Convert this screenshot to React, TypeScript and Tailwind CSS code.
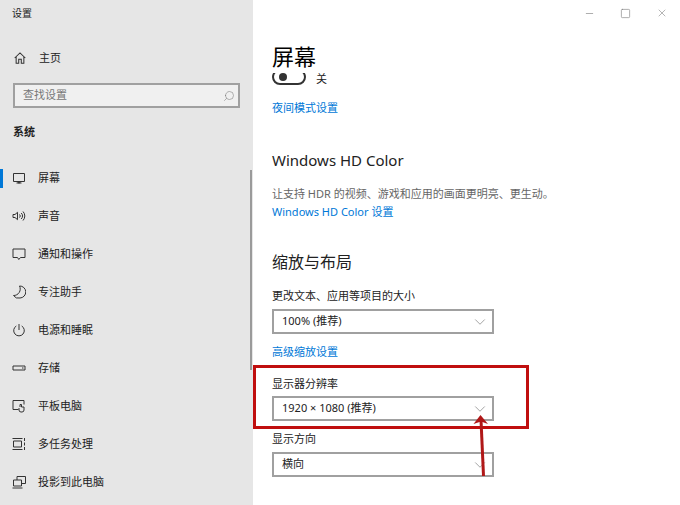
import { ChevronDown, Search, Minus, Square, X } from "lucide-react";
import type { ReactNode } from "react";

const cjk = "font-['Noto_Sans','Noto_Sans_CJK_SC',sans-serif]";

const ic = {
  fill: "none",
  stroke: "#333",
  strokeWidth: 1,
};

function Icon({ children }: { children: ReactNode }) {
  return (
    <svg viewBox="0 0 14 14" className="w-[14px] h-[14px] shrink-0" {...ic}>
      {children}
    </svg>
  );
}

const navItems: { label: string; active?: boolean; icon: ReactNode }[] = [
  {
    label: "屏幕",
    active: true,
    icon: (
      <Icon>
        <path d="M1.500 2.500h11v8h-11z" />
        <path d="M4.500 12h5M6 10.800h2v1H6z" />
      </Icon>
    ),
  },
  {
    label: "声音",
    icon: (
      <Icon>
        <path d="M1 5.500v3h2l2.500 2.200V3.300L3 5.500z" />
        <path d="M7.500 5.500a2 2 0 0 1 0 3M9.200 4a4 4 0 0 1 0 6M11 2.500a6.500 6.500 0 0 1 0 9" />
      </Icon>
    ),
  },
  {
    label: "通知和操作",
    icon: (
      <Icon>
        <path d="M1 2h12v8.500H8.500L6.800 12.500 5.500 10.500H1z" />
      </Icon>
    ),
  },
  {
    label: "专注助手",
    icon: (
      <Icon>
        <path d="M7.500 1a6 6 0 0 1 .5 12 6 6 0 0 1-6.500-2.500 6.500 6.500 0 0 0 6-9.500z" />
      </Icon>
    ),
  },
  {
    label: "电源和睡眠",
    icon: (
      <Icon>
        <path d="M7 1v6" />
        <path d="M4.300 3a5.300 5.300 0 1 0 5.400 0" />
      </Icon>
    ),
  },
  {
    label: "存储",
    icon: (
      <Icon>
        <path d="M1 5h12v4H1z" />
        <path d="M10 7h1.500" />
      </Icon>
    ),
  },
  {
    label: "平板电脑",
    icon: (
      <Icon>
        <path d="M6.500 10.500H1V1.500h11v4" />
        <path d="M8 8V5.500h1.500V8H12v3a2 2 0 0 1-2 2H9a2 2 0 0 1-2-2V9" />
      </Icon>
    ),
  },
  {
    label: "多任务处理",
    icon: (
      <Icon>
        <path d="M0.500 1.500h10M0.500 12.500h10M1.500 4h8v6h-8z" />
        <path d="M12.500 1v3M12.500 5.500v3M12.500 10v3" />
      </Icon>
    ),
  },
  {
    label: "投影到此电脑",
    icon: (
      <Icon>
        <path d="M5 5V1.500h8.500v7H9.500" />
        <path d="M1.500 5h8v6h-8zM0.500 13h10" />
      </Icon>
    ),
  },
];

function Dropdown({ value }: { value: string }) {
  return (
    <div className="w-[222px] h-[25px] border-2 border-[#a0a0a0] bg-white flex items-center justify-between pl-2 pr-[3px] text-[11px] text-[#222]">
      <span>{value}</span>
      <ChevronDown className="w-[18px] h-[18px] text-[#777]" strokeWidth={0.9} />
    </div>
  );
}

export default function App() {
  return (
    <div className={`relative w-[680px] h-[505px] overflow-hidden flex bg-white ${cjk}`}>
      {/* sidebar */}
      <aside className="relative w-[253px] shrink-0 h-full bg-[#e6e6e6] text-[11px] text-[#222]">
        <div className="h-[26px] pl-[12px] pt-[5px] leading-4 text-[10px]">设置</div>
        <div className="h-[38px] mt-[13px] flex items-center pl-[14px] gap-[13px]">
          <svg viewBox="0 0 14 14" className="w-[12px] h-[12px] -mt-[1px]" fill="none" stroke="#333" strokeWidth={1.200}>
            <path d="M0.800 7L7 1l6.200 6M2.500 5.500V13h3V8.500h3V13h3V5.500" />
          </svg>
          <span>主页</span>
        </div>
        <div className="ml-[13px] mt-[6px] w-[227px] h-[25px] border-2 border-[#a0a0a0] bg-[#f0f0f0] flex items-center justify-between pl-2 pr-[3px] text-[#777]">
          <span>查找设置</span>
          <Search className="w-[12px] h-[12px] -scale-x-100 text-[#777]" strokeWidth={1.100} />
        </div>
        <div className="pl-[13px] mt-[16px] h-[16px] leading-4 font-bold">系统</div>
        <nav className="mt-[19px]">
          {navItems.map((item) => (
            <div key={item.label} className="relative h-[38px] flex items-center pl-[12px] gap-[12px]">
              {item.active && <div className="absolute left-0 top-[10px] w-[3px] h-[19px] bg-[#0078d7]" />}
              {item.icon}
              <span>{item.label}</span>
            </div>
          ))}
        </nav>
        {/* scrollbar */}
        <div className="absolute right-[1px] top-[170px] w-[2px] h-[200px] bg-[#9a9a9a]" />
      </aside>

      {/* main */}
      <main className="relative flex-1 h-full pl-[19px] text-[#222]">
        <div className="flex justify-end items-center gap-[25px] h-[26px] pr-[12px] text-[#777]">
          <Minus className="w-[11px] h-[11px]" strokeWidth={1.300} />
          <Square className="w-[11px] h-[11px]" strokeWidth={1.300} />
          <X className="w-[12px] h-[12px]" strokeWidth={1.100} />
        </div>
        <h1 className="mt-[14px] h-[32px] text-[22px] leading-[32px] font-normal text-black">屏幕</h1>
        <div className="mt-[1px] h-[12px] flex items-end gap-[10px]">
          <div className="h-[12px] overflow-hidden flex items-end">
            <div className="shrink-0 w-[34px] h-[16px] rounded-full border-2 border-[#333] flex items-center pl-[5px]">
              <div className="w-[8px] h-[8px] rounded-full bg-[#333]" />
            </div>
          </div>
          <span className="text-[11px] leading-[14px] mb-[-1px]">关</span>
        </div>
        <a className="block mt-[15px] h-[16px] text-[11px] leading-4 text-[#0078d7]">夜间模式设置</a>
        <h2 className="mt-[32px] h-[24px] text-[15px] leading-6 font-normal">Windows HD Color</h2>
        <p className="mt-[14px] h-[16px] text-[11px] leading-4 text-[#666]">让支持 HDR 的视频、游戏和应用的画面更明亮、更生动。</p>
        <a className="block mt-[2px] h-[16px] text-[11px] leading-4 text-[#0078d7]">Windows HD Color 设置</a>
        <h2 className="mt-[30px] h-[24px] text-[16px] leading-6 font-normal">缩放与布局</h2>
        <div className="mt-[14px] h-[16px] text-[11px] leading-4">更改文本、应用等项目的大小</div>
        <div className="mt-[5px]">
          <Dropdown value="100% (推荐)" />
        </div>
        <a className="block mt-[10px] h-[16px] text-[11px] leading-4 text-[#0078d7]">高级缩放设置</a>
        <div className="mt-[16px] h-[16px] text-[11px] leading-4">显示器分辨率</div>
        <div className="mt-[4px]">
          <Dropdown value="1920 × 1080 (推荐)" />
        </div>
        <div className="mt-[10px] h-[16px] text-[11px] leading-4">显示方向</div>
        <div className="mt-[5px]">
          <Dropdown value="横向" />
        </div>
      </main>

      {/* annotation */}
      <div className="absolute left-[253px] top-[365px] w-[276px] h-[64px] border-[3px] border-[#c00f0f]" />
      <svg className="absolute left-[470px] top-[410px] w-[24px] h-[70px]" viewBox="0 0 24 70" fill="none">
        <path d="M11 10L13.500 66" stroke="#b01818" strokeWidth={3} />
        <path d="M10.500 5L3.500 14L11 11.500L18 14z" fill="#b01818" />
      </svg>
    </div>
  );
}
